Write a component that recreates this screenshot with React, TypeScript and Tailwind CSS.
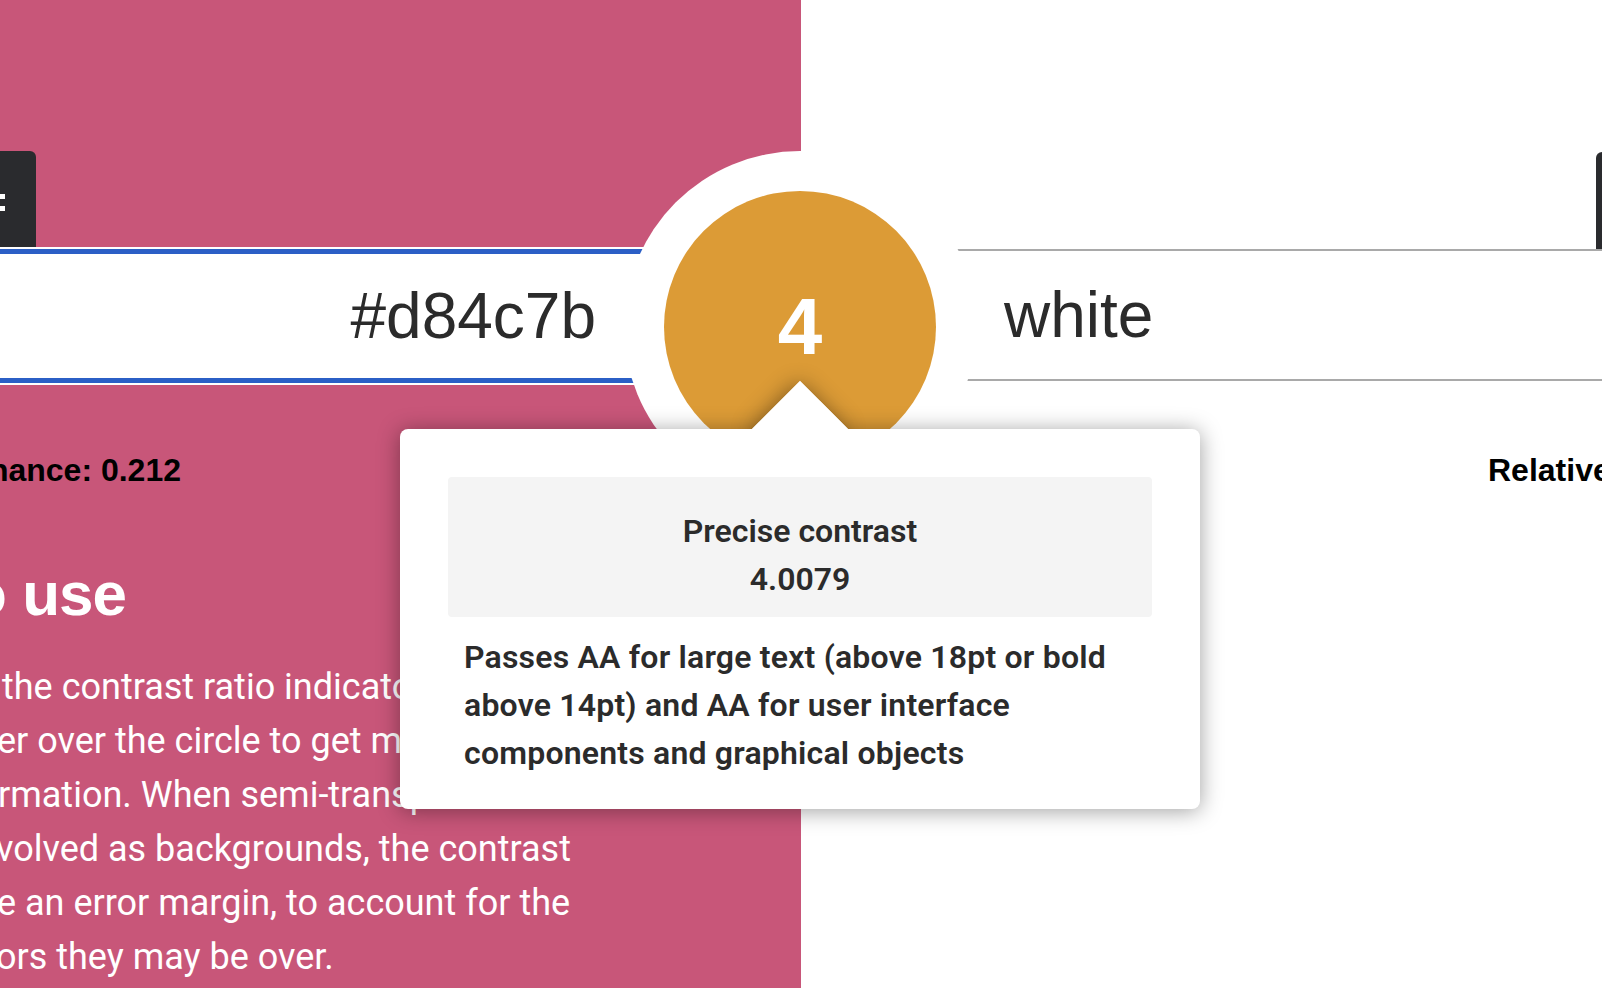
import React from 'react';

const sans = "font-['Liberation_Sans',Arial,sans-serif]";
const text = "font-['Roboto','Liberation_Sans',sans-serif]";

// lines of the "How to use" paragraph, as they fall in the viewport
const usageLines = [
  { t: 'the contrast ratio indicator to see how', shift: 'ml-[2px]' },
  { t: 'er over the circle to get more', shift: 'ml-[-3px]' },
  { t: 'rmation. When semi-transparent', shift: 'ml-[-2px]' },
  { t: 'volved as backgrounds, the contrast', shift: 'ml-[-4px]' },
  { t: 'e an error margin, to account for the', shift: 'ml-[-3px]' },
  { t: 'ors they may be over.', shift: 'ml-[-4px]' },
];

const ContrastTooltip: React.FC = () => (
  <>
    {/* arrow with its shadow, sits under the body */}
    <div className="absolute left-[766px] top-[395px] w-[68px] h-[68px] rotate-45 bg-white shadow-[0_2px_22px_rgba(0,0,0,0.45)]" />

    <div className={`absolute left-[400px] top-[429px] w-[800px] h-[380px] bg-white rounded-lg shadow-[0_2px_22px_rgba(0,0,0,0.38)] px-12 pt-12 ${text} text-[#2b2b2b] text-[32px] leading-[48px] font-semibold`}>
      <div className="bg-[#f4f4f4] rounded-[4px] pt-[30px] pb-[14px] text-center">
        <div>Precise contrast</div>
        <div>4.0079</div>
      </div>
      <p className="mt-4 px-4 tracking-[0.2px]">
        Passes AA for large text (above 18pt or bold
        <br />
        above 14pt) and AA for user interface
        <br />
        components and graphical objects
      </p>
    </div>

    {/* arrow again, without shadow, to hide the body's shadow under it */}
    <div className="absolute left-[766px] top-[395px] w-[68px] h-[68px] rotate-45 bg-white" />
  </>
);

export default function App() {
  return (
    <div className={`relative w-[1602px] h-[988px] overflow-hidden bg-white ${sans}`}>
      <div className="grid grid-cols-2 h-full">
        {/* background colour side */}
        <section className="bg-[#c85679] flex flex-col pt-[151px] min-w-0 overflow-hidden">
          <div className="w-[36px] h-[96px] shrink-0 bg-[#2a2b2e] rounded-tr-[6px] flex flex-col gap-[7px] pt-[43px]">
            <div className="w-[5px] h-[5px] bg-white" />
            <div className="w-[5px] h-[5px] bg-white" />
          </div>
          <div className="mt-[2px] h-[134px] shrink-0 bg-white border-y-[5px] border-[#2b5fc6] ring-2 ring-white flex items-center justify-end pr-[205px] text-[64px] leading-none text-[#2b2b2b]">
            #d84c7b
          </div>

          <div className="mt-[67px] w-[181px] flex justify-end text-[32px] leading-[40px] font-bold text-black whitespace-nowrap">
            <span className="shrink-0">Relative luminance: 0.212</span>
          </div>

          <div className="mt-[68px] w-[126px] flex justify-end text-[62px] leading-[72px] font-bold text-white tracking-[-1px] whitespace-nowrap">
            <h2 className="shrink-0">How to use</h2>
          </div>

          <div className={`mt-[30px] ${text} text-[36px] leading-[54px] text-white whitespace-nowrap`}>
            {usageLines.map((l, i) => (
              <div key={i} className={l.shift}>
                {l.t}
              </div>
            ))}
          </div>
        </section>

        {/* text colour side */}
        <section className="bg-white flex flex-col pt-[152px] min-w-0 overflow-hidden">
          <div className="self-end w-[36px] h-[97px] shrink-0 mr-[-30px] bg-[#2a2b2e] rounded-tl-[6px]" />
          <div className="h-[132px] shrink-0 border-y-2 border-[#a9a9a9] flex items-center pl-[203px] text-[64px] leading-none text-[#2b2b2b]">
            white
          </div>
          <div className="mt-[69px] pl-[687px] text-[32px] leading-[40px] font-bold text-black whitespace-nowrap">
            Relative luminance: 1
          </div>
        </section>
      </div>

      {/* contrast indicator */}
      <div className="absolute left-[624px] top-[151px] w-[352px] h-[352px] rounded-full bg-white" />
      <div className="absolute left-[664px] top-[191px] w-[272px] h-[272px] rounded-full bg-[#dc9b36] flex items-center justify-center text-white font-bold text-[80px] leading-none">
        4
      </div>

      <ContrastTooltip />
    </div>
  );
}
